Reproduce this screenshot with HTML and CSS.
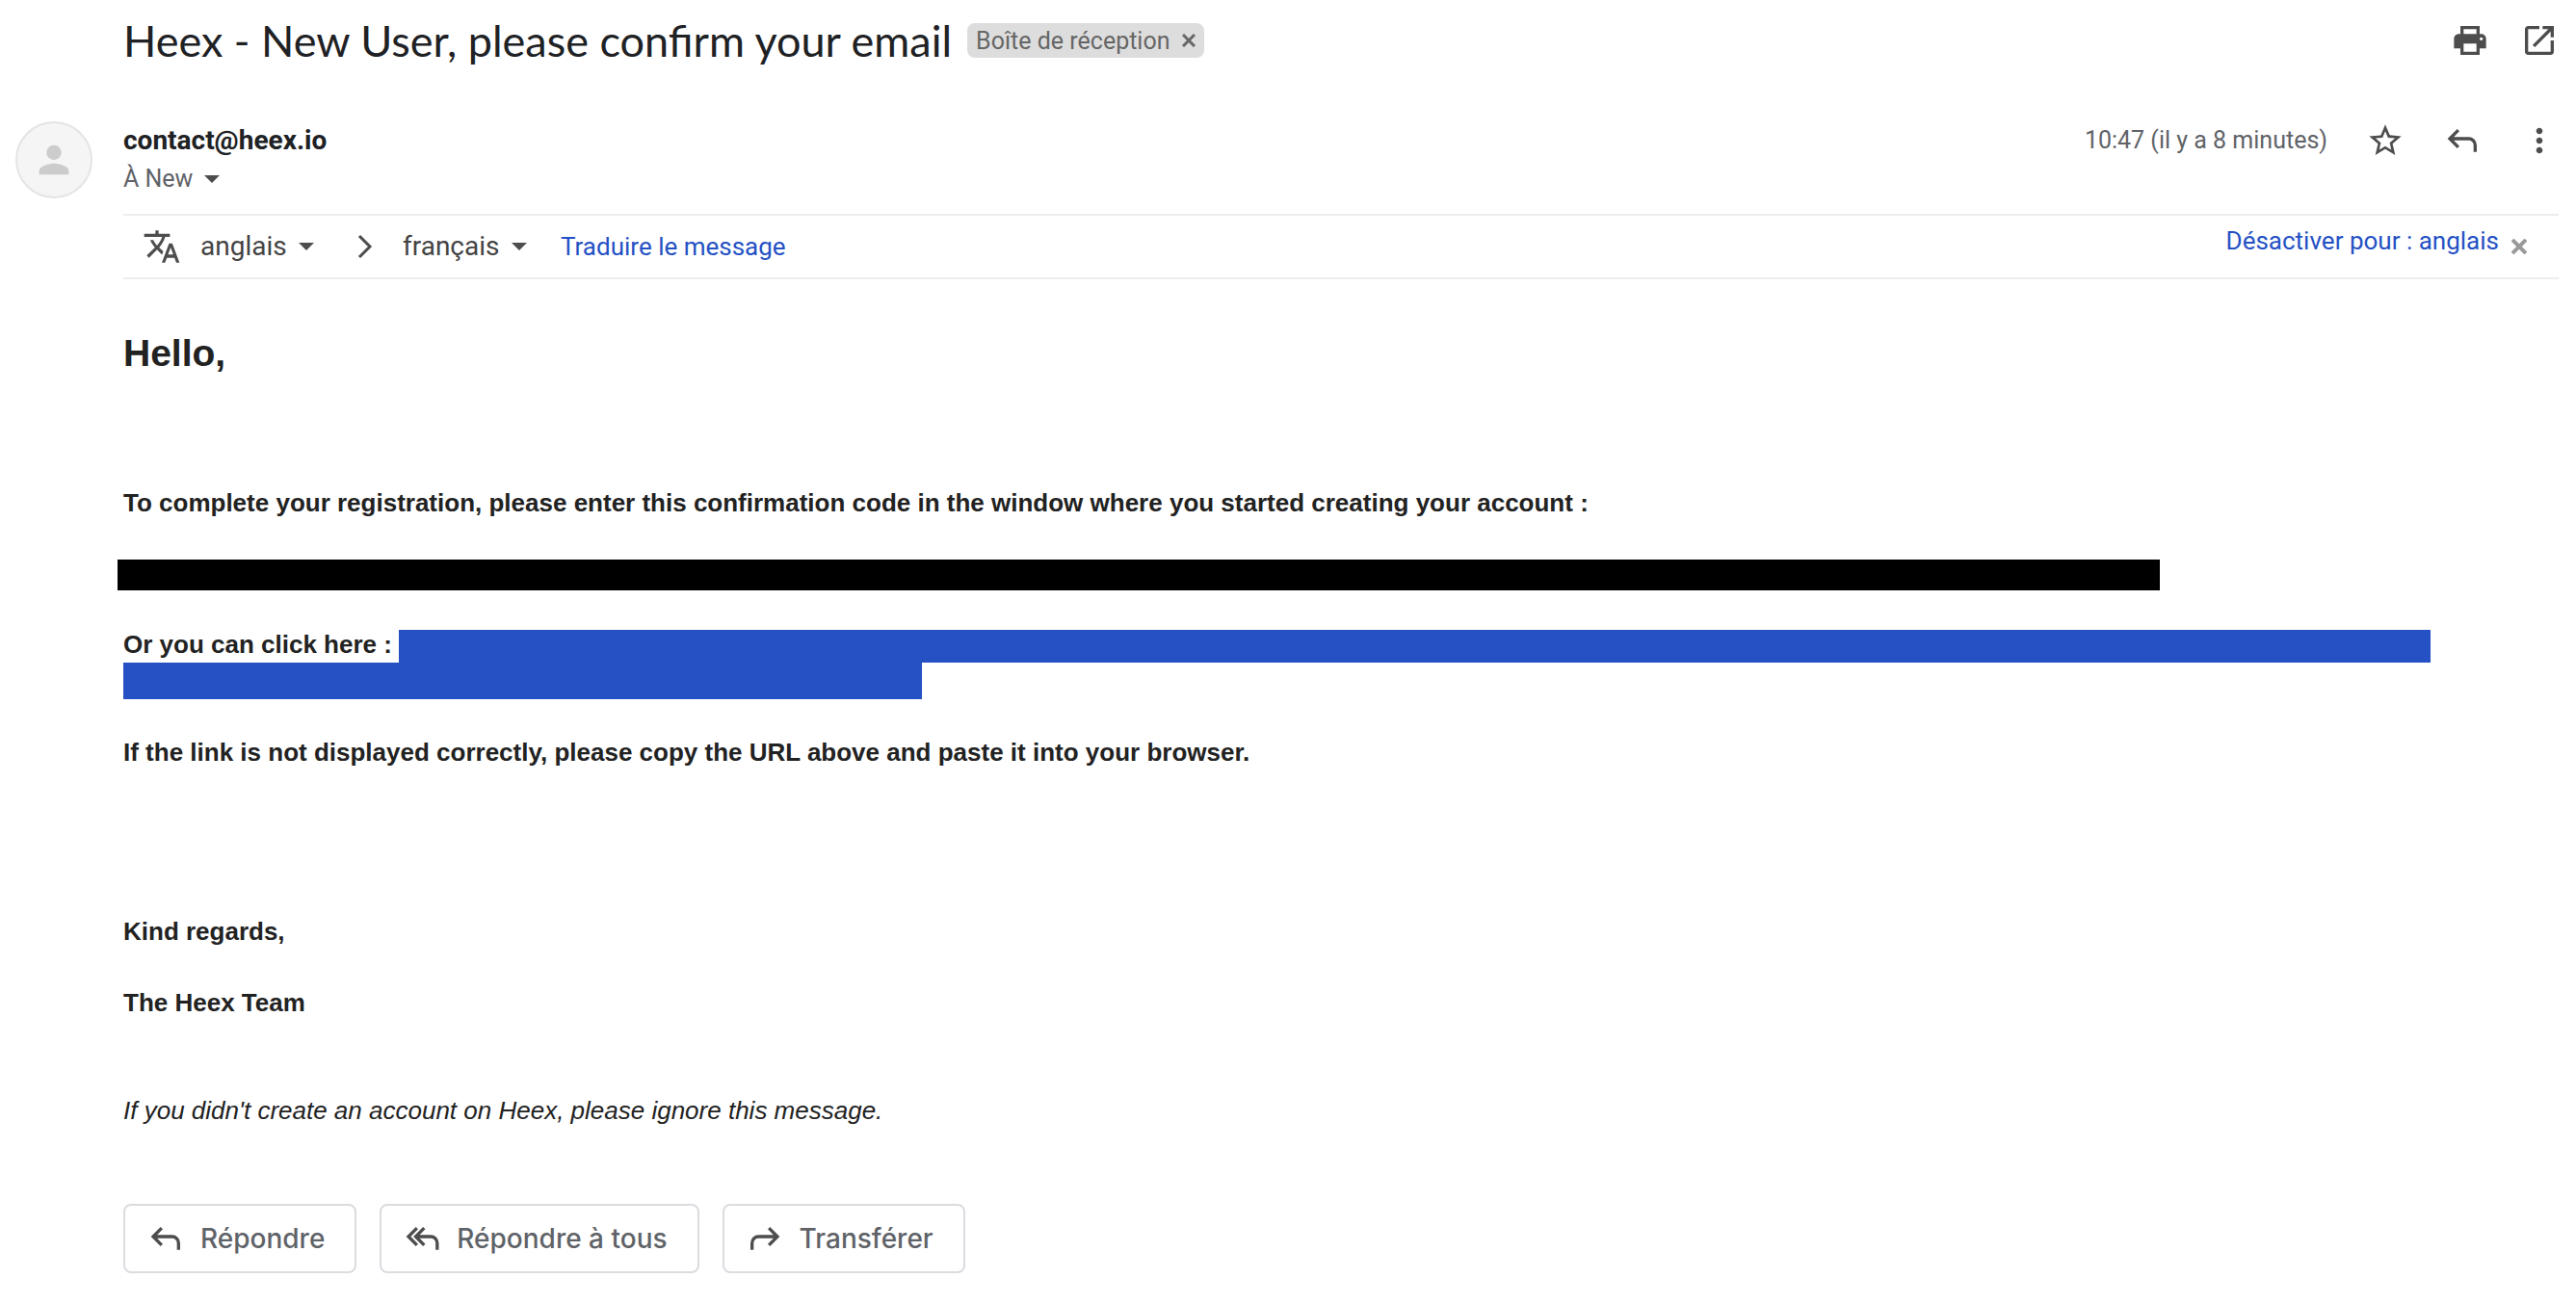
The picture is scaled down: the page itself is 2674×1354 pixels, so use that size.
FILE: index.html
```html
<!DOCTYPE html>
<html lang="fr">
<head>
    <meta charset="UTF-8">
    <meta name="viewport" content="width=device-width, initial-scale=1.0">
    <title>Heex - New User, please confirm your email</title>
    <link rel="stylesheet" href="styles.css">
</head>
<body>
    <main class="mail">
        <header class="subject">
            <h1>Heex - New User, please confirm your email</h1>
            <div class="chip">
                <span>Boîte de réception</span>
                <button class="plain" aria-label="Supprimer le libellé">
                    <svg width="14" height="14" viewBox="0 0 14 14"><path d="M1 1l12 12M13 1L1 13" stroke="currentColor" stroke-width="3"/></svg>
                </button>
            </div>
            <div class="subject-tools">
                <button class="plain icon" aria-label="Tout imprimer">
                    <svg viewBox="0 0 24 24"><path d="M19 8H5c-1.660 0-3 1.340-3 3v6h4v4h12v-4h4v-6c0-1.660-1.340-3-3-3zm-3 11H8v-5h8v5zm3-7c-.55 0-1-.45-1-1s.45-1 1-1 1 .45 1 1-.45 1-1 1zm-1-9H6v5h2V5h8v3h2z"/></svg>
                </button>
                <button class="plain icon" aria-label="Dans une nouvelle fenêtre">
                    <svg viewBox="0 0 24 24"><path d="M19 19H5V5h7V3H5c-1.110 0-2 .9-2 2v14c0 1.100.89 2 2 2h14c1.100 0 2-.9 2-2v-7h-2v7zM14 3v2h3.590l-9.830 9.830 1.410 1.410L19 6.410V10h2V3h-7z"/></svg>
                </button>
            </div>
        </header>

        <div class="avatar">
            <svg viewBox="0 0 24 24"><path d="M12 12c2.210 0 4-1.790 4-4s-1.790-4-4-4-4 1.790-4 4 1.790 4 4 4zm0 2c-2.670 0-8 1.340-8 4v2h16v-2c0-2.660-5.330-4-8-4z"/></svg>
        </div>

        <section class="sender">
            <div>
                <div class="sender-name">contact@heex.io</div>
                <button class="plain recipient">
                    À New
                    <svg class="caret" viewBox="0 0 16 8"><path d="M0 0h16L8 8z"/></svg>
                </button>
            </div>
            <div class="sender-tools">
                <span class="date">10:47 (il y a 8 minutes)</span>
                <button class="plain icon" aria-label="Suivre">
                    <svg viewBox="0 0 24 24"><path d="M22 9.240l-7.190-.62L12 2 9.190 8.630 2 9.240l5.460 4.730L5.820 21 12 17.270 18.180 21l-1.630-7.030L22 9.240zM12 15.400l-3.760 2.270 1-4.280-3.320-2.880 4.380-.38L12 6.100l1.710 4.040 4.380.38-3.320 2.880 1 4.280L12 15.400z"/></svg>
                </button>
                <button class="plain icon" aria-label="Répondre">
                    <svg viewBox="0 0 24 24"><path class="stroke" d="M9.500 5.500L4.200 10.800l5.300 5.300M4.400 10.800H16a4 4 0 0 1 4 4V19"/></svg>
                </button>
                <button class="plain icon" aria-label="Plus">
                    <svg viewBox="0 0 24 24"><path d="M12 8c1.100 0 2-.9 2-2s-.9-2-2-2-2 .9-2 2 .9 2 2 2zm0 2c-1.100 0-2 .9-2 2s.9 2 2 2 2-.9 2-2-.9-2-2-2zm0 6c-1.100 0-2 .9-2 2s.9 2 2 2 2-.9 2-2-.9-2-2-2z"/></svg>
                </button>
            </div>
        </section>

        <section class="translate">
            <span class="icon">
                <svg viewBox="0 0 24 24"><path d="M12.870 15.070l-2.540-2.510.03-.03c1.740-1.940 2.980-4.170 3.710-6.530H17V4h-7V2H8v2H1v1.990h11.170C11.500 7.920 10.440 9.750 9 11.350 8.070 10.320 7.300 9.190 6.690 8h-2c.73 1.630 1.730 3.170 2.980 4.560l-5.090 5.020L4 19l5-5 3.110 3.110.76-2.040zM18.500 10h-2L12 22h2l1.120-3h4.750L21 22h2l-4.500-12zm-2.620 7l1.620-4.330L19.120 17h-3.240z"/></svg>
            </span>
            <label class="lang">
                <select aria-label="Langue source"><option>anglais</option></select>
                <svg class="caret" viewBox="0 0 16 8"><path d="M0 0h16L8 8z"/></svg>
            </label>
            <svg class="chevron" viewBox="0 0 16 26"><path d="M2 2l11 11L2 24"/></svg>
            <label class="lang">
                <select aria-label="Langue cible"><option>français</option></select>
                <svg class="caret" viewBox="0 0 16 8"><path d="M0 0h16L8 8z"/></svg>
            </label>
            <a class="translate-link" href="#">Traduire le message</a>
            <a class="translate-off" href="#">Désactiver pour : anglais</a>
            <button class="plain translate-close" aria-label="Fermer">
                <svg width="16" height="16" viewBox="0 0 16 16"><path d="M1 1l14 14M15 1L1 15" stroke="currentColor" stroke-width="4"/></svg>
            </button>
        </section>

        <article class="message" lang="en">
            <h2>Hello,</h2>
            <p>To complete your registration, please enter this confirmation code in the window where you started creating your account :</p>
            <div class="code"></div>
            <div class="confirm">
                <span>Or you can click here :</span>
                <a class="url-start" href="#" aria-label="Confirmation link"></a>
                <a class="url-end" href="#" aria-label="Confirmation link"></a>
            </div>
            <p class="fallback">If the link is not displayed correctly, please copy the URL above and paste it into your browser.</p>
            <p>Kind regards,</p>
            <p class="signature">The Heex Team</p>
            <p class="notice">If you didn't create an account on Heex, please ignore this message.</p>
        </article>

        <footer class="actions">
            <button>
                <svg viewBox="0 0 24 24"><path class="stroke" d="M9.500 5.500L4.200 10.800l5.300 5.300M4.400 10.800H16a4 4 0 0 1 4 4V19"/></svg>
                Répondre
            </button>
            <button>
                <svg viewBox="0 0 24 24"><path class="stroke" d="M8.900 5.500L3.600 10.800l5.300 5.300M13.400 5.500l-5.300 5.300 5.300 5.300M8.300 10.800H17.500a4 4 0 0 1 4 4V19"/></svg>
                Répondre à tous
            </button>
            <button>
                <svg viewBox="0 0 24 24"><path class="stroke" d="M14.500 5.500l5.300 5.300-5.300 5.300M19.600 10.800H8a4 4 0 0 0-4 4V19"/></svg>
                Transférer
            </button>
        </footer>
    </main>
</body>
</html>
```
FILE: styles.css
```css
:root {
    --text: #202124;
    --muted: #5f6368;
    --icon: #4d4d4d;
    --link: #2551c4;
    --line: #eceeee;
    --border: #dadce0;
}

* {
    box-sizing: border-box;
}

body {
    margin: 0;
    background-color: #fff;
    color: var(--text);
    font-family: Roboto, sans-serif;
    font-size: 25px;
}

a {
    color: var(--link);
    text-decoration: none;
}

svg {
    display: block;
    flex: none;
    fill: currentColor;
}

.stroke {
    fill: none;
    stroke: currentColor;
    stroke-width: 2;
}

.plain {
    border: none;
    padding: 0;
    background: none;
    color: inherit;
    font: inherit;
    cursor: pointer;
}

.icon {
    color: var(--icon);
}

.icon svg {
    width: 40px;
    height: 40px;
}

.caret {
    width: 16px;
    height: 8px;
    color: var(--icon);
}

.mail {
    display: grid;
    grid-template-columns: 112px 1fr;
    padding: 12px 18px 32px 16px;
}

.mail > * {
    grid-column: 2;
}

/* Subject line */
.subject {
    display: flex;
    align-items: center;
    min-height: 60px;
    margin-bottom: 54px;
}

.subject h1 {
    margin: 0;
    font-family: Lato, sans-serif;
    font-size: 45px;
    line-height: 60px;
    font-weight: 400;
}

.chip {
    display: flex;
    align-items: center;
    gap: 12px;
    height: 36px;
    margin-left: 16px;
    padding: 0 9px;
    border-radius: 8px;
    background-color: #ddd;
    color: #666;
}

.subject-tools {
    display: flex;
    gap: 32px;
    margin-left: auto;
}

/* Sender */
.mail > .avatar {
    grid-column: 1;
    display: flex;
    align-items: center;
    justify-content: center;
    width: 80px;
    height: 80px;
    border: 2px solid #e4e4e4;
    border-radius: 50%;
    background-color: #f5f5f5;
    color: #ccc;
}

.avatar svg {
    width: 46px;
    height: 46px;
}

.sender {
    display: flex;
    justify-content: space-between;
    align-items: flex-start;
    margin-bottom: 16px;
    line-height: 40px;
}

.sender-name {
    font-size: 28px;
    font-weight: 700;
}

.recipient {
    display: flex;
    align-items: center;
    gap: 12px;
    color: var(--muted);
}

.sender-tools {
    display: flex;
    gap: 40px;
    color: var(--muted);
}

/* Translation bar */
.translate {
    display: flex;
    align-items: center;
    height: 68px;
    padding: 0 33px 0 20px;
    border-top: 2px solid var(--line);
    border-bottom: 2px solid var(--line);
    font-size: 26px;
    line-height: 32px;
}

.lang {
    display: flex;
    align-items: center;
    gap: 12px;
    margin-left: 20px;
}

.lang select {
    appearance: none;
    border: none;
    padding: 0;
    background: none;
    color: #444;
    font: inherit;
    font-size: 28px;
}

.chevron {
    width: 16px;
    height: 26px;
    margin: 0 11px 0 45px;
    fill: none;
    stroke: var(--icon);
    stroke-width: 3;
}

.translate-link {
    margin-left: 35px;
}

.translate-off {
    margin: 0 13px 12px auto;
}

.translate-close {
    color: #999;
}

/* Message body */
.message {
    padding: 54px 0 78px;
    font-family: "Liberation Sans", Arial, sans-serif;
    font-size: 26px;
    line-height: 38px;
    font-weight: 700;
    color: #222;
}

.message h2 {
    margin: 0 0 113px;
    font-size: 39px;
    line-height: 46px;
}

.message p {
    margin: 0 0 36px;
}

.code {
    width: 2120px;
    max-width: 100%;
    height: 32px;
    margin: 40px 0 37px -6px;
    background-color: #000;
}

.confirm {
    display: grid;
    grid-template-columns: auto 1fr;
    align-items: end;
    column-gap: 7px;
    margin-bottom: 36px;
}

.confirm a {
    background-color: var(--link);
}

.url-start {
    height: 34px;
    margin-right: 133px;
}

.url-end {
    grid-column: 1 / -1;
    width: 829px;
    max-width: 100%;
    height: 38px;
}

.message .fallback {
    margin-bottom: 148px;
}

.message .signature {
    margin-bottom: 74px;
}

.message .notice {
    margin: 0;
    font-weight: 400;
    font-style: italic;
}

/* Reply buttons */
.actions {
    display: flex;
    gap: 24px;
}

.actions button {
    display: flex;
    align-items: center;
    gap: 16px;
    height: 72px;
    padding: 0 31px 0 22px;
    border: 2px solid var(--border);
    border-radius: 8px;
    background-color: #fff;
    color: var(--muted);
    font-family: Inter, sans-serif;
    font-size: 28px;
    font-weight: 500;
    cursor: pointer;
}

.actions svg {
    width: 40px;
    height: 40px;
    color: var(--icon);
}
```
